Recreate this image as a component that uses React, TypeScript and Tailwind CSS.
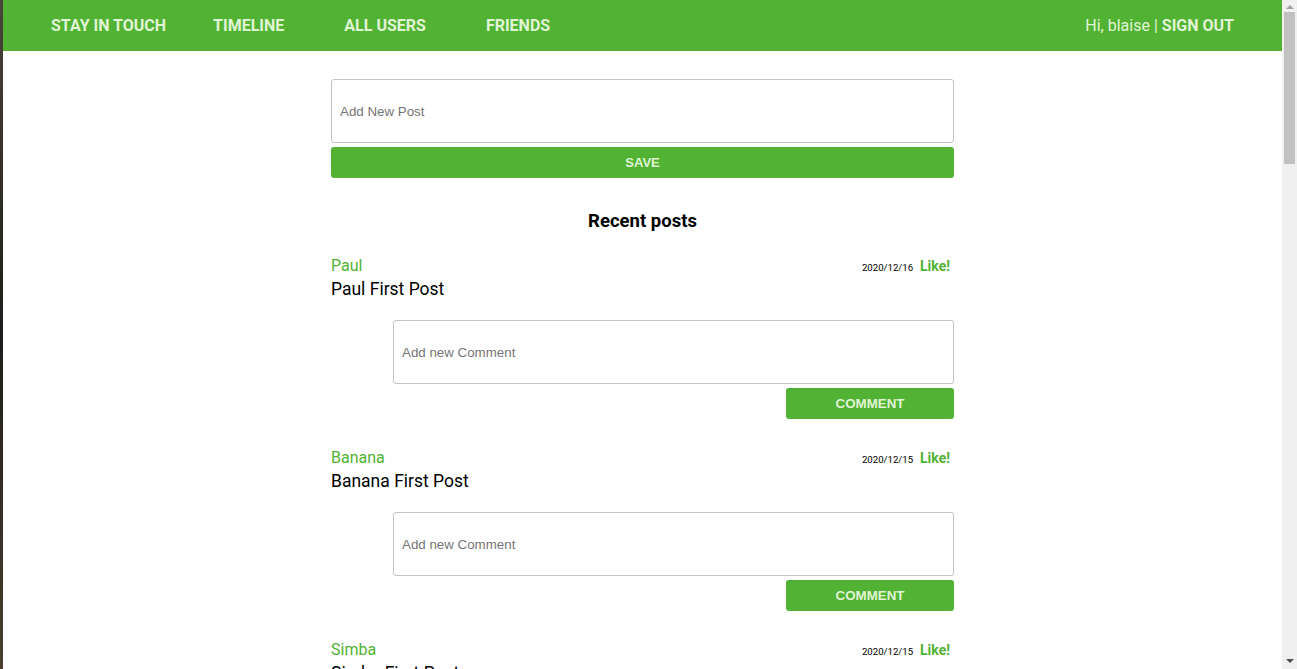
import React from "react";

const posts = [
  { name: "Paul", date: "2020/12/16", body: "Paul First Post" },
  { name: "Banana", date: "2020/12/15", body: "Banana First Post" },
  { name: "Simba", date: "2020/12/15", body: "Simba First Post" },
];

function Post({ name, date, body }: { name: string; date: string; body: string }) {
  return (
    <div className="mb-[29px]">
      <div className="flex items-baseline justify-between">
        <span className="text-[16px] leading-[20px] text-[#52b233]">{name}</span>
        <div className="flex items-baseline pr-[4px]">
          <span className="text-[9.6px] text-black">{date}</span>
          <span className="ml-[7px] text-[14px] font-bold text-[#52b233]">Like!</span>
        </div>
      </div>
      <p className="mt-[1px] text-[17.5px] leading-[22px] text-black">{body}</p>
      <div className="ml-[62px] mt-[20px] flex flex-col items-end">
        <input
          placeholder="Add new Comment"
          className="h-[64px] w-full rounded-[3px] border border-[#c4c4c4] px-[8px] font-['Liberation_Sans',Arial,sans-serif] text-[13.33px] placeholder:text-[#757575] outline-none"
        />
        <button className="mt-[4px] h-[31px] w-[168px] rounded-[3px] bg-[#52b233] font-['Liberation_Sans',Arial,sans-serif] text-[13.33px] font-bold text-[#e0f5d5]">
          COMMENT
        </button>
      </div>
    </div>
  );
}

export default function App() {
  return (
    <div className="flex h-[669px] overflow-hidden bg-white font-['Roboto',sans-serif]">
      {/* desktop strip behind window */}
      <div className="w-[3px] shrink-0 bg-gradient-to-b from-[#4a4438] via-[#1f1d1a] to-[#4a3f30]"></div>

      <div className="flex-1 min-w-0">
        <nav className="flex h-[51px] items-center bg-[#52b233] px-[48px] text-[16px] font-bold text-[#e0f5d5]">
          <a>STAY IN TOUCH</a>
          <a className="ml-[47px]">TIMELINE</a>
          <a className="ml-[60px]">ALL USERS</a>
          <a className="ml-[60px]">FRIENDS</a>
          <div className="ml-auto">
            <span className="font-normal">Hi, blaise | </span>
            <a>SIGN OUT</a>
          </div>
        </nav>

        <main className="mx-auto w-[623px] pt-[28px]">
          <input
            placeholder="Add New Post"
            className="block h-[64px] w-full rounded-[3px] border border-[#c4c4c4] px-[8px] font-['Liberation_Sans',Arial,sans-serif] text-[13.33px] placeholder:text-[#757575] outline-none"
          />
          <button className="mt-[4px] block h-[31px] w-full rounded-[3px] bg-[#52b233] font-['Liberation_Sans',Arial,sans-serif] text-[13px] font-bold text-[#e0f5d5]">
            SAVE
          </button>

          <h2 className="mt-[32px] text-center text-[18.5px] font-bold leading-[22px] text-black">Recent posts</h2>

          <div className="mt-[24px]">
            {posts.map((p) => (
              <Post key={p.name} {...p} />
            ))}
          </div>
        </main>
      </div>

      {/* scrollbar */}
      <div className="flex w-[15px] shrink-0 flex-col items-center bg-[#f0f0f0]">
        <div className="mt-[5px] h-0 w-0 border-x-[4px] border-b-[4px] border-x-transparent border-b-[#a3a3a3]"></div>
        <div className="mt-[3px] h-[152px] w-[11px] bg-[#c1c1c1]"></div>
        <div className="mb-[6px] mt-auto h-0 w-0 border-x-[4px] border-t-[4px] border-x-transparent border-t-[#505050]"></div>
      </div>
    </div>
  );
}
